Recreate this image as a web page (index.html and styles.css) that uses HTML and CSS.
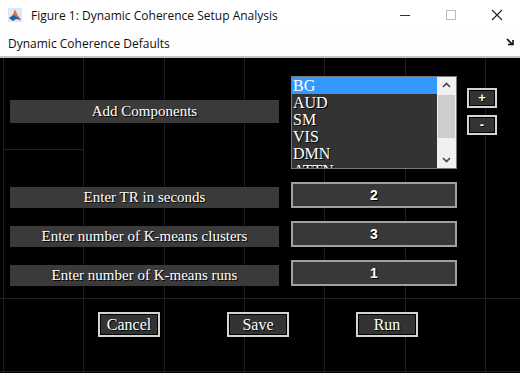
FILE: index.html
```html
<!DOCTYPE html>
<html lang="en">
<head>
    <meta charset="UTF-8">
    <title>Figure 1: Dynamic Coherence Setup Analysis</title>
    <link rel="stylesheet" href="styles.css">
</head>
<body>
    <div class="window">
        <div class="titlebar">
            <svg class="app-icon" width="14" height="14" viewBox="0 0 14 14">
                <rect x="0" y="0" width="14" height="14" fill="#dfe8f2"/>
                <polygon points="1,10 5,7 7,2 10,8 13,12 8,11 5,13" fill="#1f5fa8"/>
                <polygon points="5,7 7,2 10,8 13,12 9,9" fill="#e8692a"/>
                <polygon points="7,2 8,4 10,8 8,6" fill="#f5a040"/>
            </svg>
            <span class="title">Figure 1: Dynamic Coherence Setup Analysis</span>
            <div class="controls">
                <span class="ctl"><svg width="12" height="12" viewBox="0 0 12 12"><line x1="1" y1="6.5" x2="11" y2="6.5" stroke="#333" stroke-width="1"/></svg></span>
                <span class="ctl"><svg width="12" height="12" viewBox="0 0 12 12"><rect x="1.5" y="1.5" width="9" height="9" fill="none" stroke="#bbb" stroke-width="1"/></svg></span>
                <span class="ctl"><svg width="12" height="12" viewBox="0 0 12 12"><path d="M1 1 L11 11 M11 1 L1 11" stroke="#222" stroke-width="1.1"/></svg></span>
            </div>
        </div>
        <div class="menubar">
            <span>Dynamic Coherence Defaults</span>
            <svg class="dock" width="8" height="8" viewBox="0 0 8 8"><path d="M1 1 L6 6 M2 6.5 H7 V2" stroke="#111" stroke-width="1.6" fill="none"/></svg>
        </div>

        <div class="canvas">
            <div class="form">
                <div class="label label-top">Add Components</div>
                <div class="listbox">
                    <ul class="items">
                        <li class="selected">BG</li>
                        <li>AUD</li>
                        <li>SM</li>
                        <li>VIS</li>
                        <li>DMN</li>
                        <li>ATTN</li>
                    </ul>
                    <div class="scrollbar">
                        <svg class="arrow" width="17" height="17" viewBox="0 0 17 17"><path d="M5 10 L8.5 6.5 L12 10" stroke="#444" stroke-width="1.6" fill="none"/></svg>
                        <span class="thumb"></span>
                        <svg class="arrow down" width="17" height="17" viewBox="0 0 17 17"><path d="M5 7 L8.5 10.5 L12 7" stroke="#444" stroke-width="1.6" fill="none"/></svg>
                    </div>
                </div>
                <div class="side-btns">
                    <button class="small-btn">+</button>
                    <button class="small-btn">-</button>
                </div>

                <div class="label">Enter TR in seconds</div>
                <div class="field">2</div>
                <div></div>

                <div class="label">Enter number of K-means clusters</div>
                <div class="field">3</div>
                <div></div>

                <div class="label">Enter number of K-means runs</div>
                <div class="field">1</div>
                <div></div>
            </div>

            <div class="actions">
                <button class="btn">Cancel</button>
                <button class="btn">Save</button>
                <button class="btn">Run</button>
            </div>
        </div>
    </div>
</body>
</html>
```

FILE: styles.css
```css
body {
    margin: 0;
    width: 520px;
    height: 373px;
    overflow: hidden;
    background-color: #000;
    font-family: "Open Sans", "Liberation Sans", sans-serif;
}

.window {
    display: flex;
    flex-direction: column;
    height: 373px;
}

.titlebar {
    display: flex;
    align-items: center;
    height: 30px;
    background-color: #fff;
    padding-left: 8px;
    font-size: 12px;
    color: #111;
}

.app-icon {
    margin-right: 9px;
}

.title {
    flex: 1;
}

.controls {
    display: flex;
    align-items: center;
}

.ctl {
    display: flex;
    justify-content: center;
    align-items: center;
    width: 46px;
    height: 30px;
}

.menubar {
    display: flex;
    align-items: center;
    justify-content: space-between;
    height: 26px;
    padding: 0 8px;
    background-color: #fdfdfd;
    border-bottom: 2px solid #c4c4c4;
    font-size: 12px;
    color: #111;
}

.dock {
    margin-top: -2px;
    margin-right: -2px;
}

.canvas {
    flex: 1;
    padding: 18px 0 0 10px;
    background-color: #000;
    background-image:
        linear-gradient(#202020, #202020),
        linear-gradient(#202020, #202020),
        linear-gradient(#202020, #202020),
        repeating-linear-gradient(to right, #1e1e1e 0 1px, transparent 1px 80.33px);
    background-size: 81px 1px, 100% 1px, 100% 1px, 100% 100%;
    background-position: 3px 91px, 0 240px, 0 313px, 3px 0;
    background-repeat: no-repeat;
}

.form {
    display: grid;
    grid-template-columns: 269px 166px 30px;
    grid-template-rows: 93px 26px 26px 26px;
    column-gap: 12px;
    row-gap: 13px;
    align-items: end;
}

.label {
    height: 21px;
    line-height: 21px;
    background-color: #3a3a3a;
    color: #fff;
    text-align: center;
    font-family: "Liberation Serif", serif;
    font-size: 15px;
    text-shadow: 1px 1px 0 #000;
}

.label-top {
    align-self: start;
    margin-top: 24px;
    height: 23px;
    line-height: 23px;
}

.listbox {
    display: flex;
    height: 93px;
    box-sizing: border-box;
    border: 1px solid #7a7a7a;
    background-color: #333;
    overflow: hidden;
}

.items {
    flex: 1;
    margin: 0;
    padding: 0;
    list-style: none;
    font-family: "Liberation Serif", serif;
    font-size: 16px;
    color: #fff;
}

.items li {
    height: 17px;
    line-height: 17px;
    padding-left: 1px;
    text-shadow: 1px 1px 0 #000;
}

.items li.selected {
    background-color: #3399ff;
    text-shadow: none;
}

.scrollbar {
    display: flex;
    flex-direction: column;
    align-items: center;
    width: 19px;
    background-color: #f0f0f0;
}

.arrow {
    flex: none;
}

.arrow.down {
    margin-top: auto;
}

.thumb {
    width: 17px;
    height: 43px;
    margin-top: 1px;
    background-color: #cdcdcd;
}

.side-btns {
    display: flex;
    flex-direction: column;
    gap: 7px;
    align-self: start;
    margin-top: 12px;
    margin-left: -2px;
}

.small-btn,
.btn {
    box-sizing: border-box;
    padding: 0;
    background-color: #333;
    color: #fff;
    border: 2px solid #d4d4d4;
    box-shadow: inset 0 0 0 1px #000;
    text-shadow: 1px 1px 0 #000;
}

.small-btn {
    width: 30px;
    height: 20px;
    font-family: "Liberation Sans", sans-serif;
    font-size: 13px;
    font-weight: bold;
    line-height: 14px;
}

.field {
    align-self: start;
    height: 26px;
    box-sizing: border-box;
    border: 2px solid #a0a0a0;
    background-color: #383838;
    color: #fff;
    text-align: center;
    line-height: 22px;
    font-family: "Liberation Sans", sans-serif;
    font-size: 14px;
    font-weight: bold;
    text-shadow: 1px 1px 0 #000;
}

.actions {
    display: flex;
    gap: 67px;
    margin-top: 26px;
    padding-left: 88px;
}

.btn {
    width: 62px;
    height: 25px;
    font-family: "Liberation Serif", serif;
    font-size: 16px;
    line-height: 19px;
}
```
